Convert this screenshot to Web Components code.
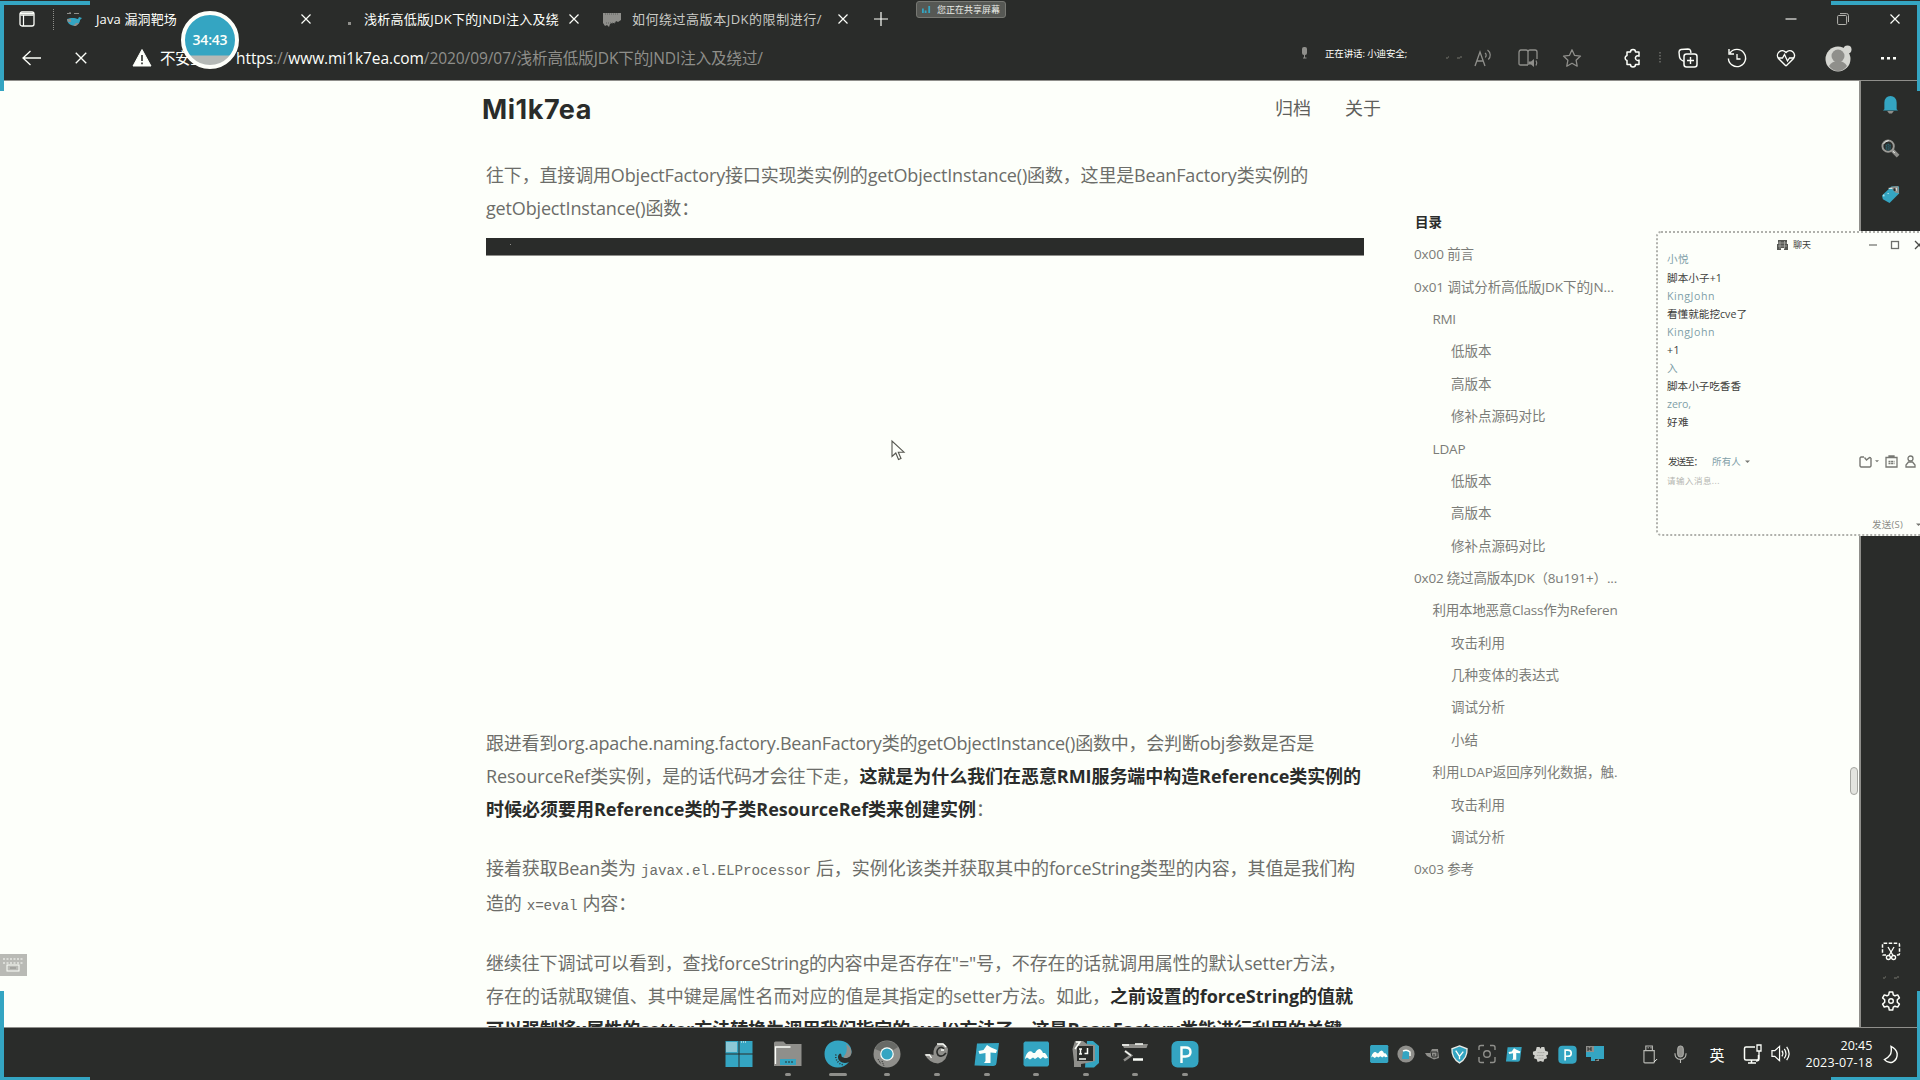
<!DOCTYPE html>
<html lang="zh-CN">
<head>
<meta charset="utf-8">
<title>浅析高低版JDK下的JNDI注入及绕过</title>
<style>
html,body{margin:0;width:1920px;height:1080px;overflow:hidden;background:#2a2c2a}
body{--dark:#2a2c2a;--paper:#fdfffa;--mid:#8f8f8b;--cyan:#34a5c2;font-family:"Open Sans","Noto Sans CJK SC",sans-serif}
</style>
</head>
<body>
<desktop-screen></desktop-screen>
<script>
const ICONS = {
  panel:['0 0 16 16','<rect x="1" y="1" width="14" height="14" rx="2" fill="none" stroke="#fdfffa" stroke-width="1.3"/><path d="M1 2.6h14M1.5 4.2h13M4.5 4v11" stroke="#fdfffa" stroke-width="1.2"/>'],
  whale:['0 0 16 16','<path d="M1 8c0 4 3 6.5 7 6.5 4 0 6-3 6-5.5L16 7l-3-1-1 2C9 6.500 4 6.500 1 8z" fill="#34a5c2"/><path d="M1 8h4v3H2zM10 12l3 0-3 3H7z" fill="#8f8f8b"/><path d="M1 2.500h4M8 2.500h5M4 1v2" stroke="#8f8f8b" stroke-width="1.200"/>'],
  x:['0 0 12 12','<path d="M1.500 1.500l9 9M10.500 1.500l-9 9" stroke="#fdfffa" stroke-width="1.200"/>'],
  dot:['0 0 3 3','<rect width="3" height="3" fill="#8f8f8b"/>'],
  favi:['0 0 18 15','<path d="M0 1h18v7l-3 2-2-1-1 2-3 0-2 1-1 3-2-2-2 1-2-3z" fill="#8f8f8b"/><path d="M2 2h14M3 11h10" stroke="#5f615e" stroke-dasharray="1 1"/>'],
  plus:['0 0 16 16','<path d="M8 1v14M1 8h14" stroke="#fdfffa" stroke-width="1.200"/>'],
  min:['0 0 12 12','<path d="M0.500 6h11" stroke="#fdfffa" stroke-width="1.100"/>'],
  restore:['0 0 12 12','<rect x=".6" y="2.500" width="9" height="9" rx="1" fill="none" stroke="#b5b5b0"/><path d="M3 .6h6.500a2 2 0 0 1 2 2V9" fill="none" stroke="#b5b5b0"/>'],
  back:['0 0 20 16','<path d="M19 8H1M8.500 1L1 8l7.500 7" fill="none" stroke="#fdfffa" stroke-width="1.300"/>'],
  warn:['0 0 18 18','<path d="M9 0.500L18 17H0z" fill="#fdfffa" stroke="#fdfffa" stroke-linejoin="round"/><path d="M9 6v6M9 13.500v1.800" stroke="#2a2c2a" stroke-width="1.600"/>'],
  micS:['0 0 10 12','<rect x="3" y="0" width="5" height="8" rx="2" fill="#8f8f8b"/><path d="M5.500 8v3M4 11h3.500" stroke="#8f8f8b"/>'],
  tinydots:['0 0 18 4','<path d="M1 3h2M3 2h1M12 3h3M15 2h2" stroke="#77776f"/>'],
  read:['0 0 20 20','<path d="M1 18L6 4l5 14M3 13h6" fill="none" stroke="#8f8f8b" stroke-width="1.300"/><path d="M11 5c1.500 1 1.500 3 .3 4.500M13.500 2c3.500 2.500 3.500 7 .8 9.500" fill="none" stroke="#8f8f8b" stroke-width="1.200"/>'],
  book:['0 0 20 20','<path d="M10 17H2.500Q1 17 1 15.500V4.500Q1 2 3 2h5q2 0 2 2v13M10 4q0-2 2-2h5q2 0 2 2v7" fill="none" stroke="#8f8f8b" stroke-width="1.300"/><path d="M10.500 13.500h2.500l3-2.500v8l-3-2.500h-2.500z" fill="#8f8f8b"/><path d="M18 12.500q1.500 2.500 0 5" stroke="#8f8f8b" fill="none" stroke-width="1.200"/>'],
  star:['0 0 20 20','<path d="M10 1.800l2.500 5.500 6 .8-4.400 4.100 1.100 6-5.200-2.900-5.200 2.900 1.100-6L1.500 8.100l6-.8z" fill="none" stroke="#8f8f8b" stroke-width="1.300" stroke-linejoin="round"/>'],
  puzzle:['0 0 20 20','<path d="M4 4h3.500a2.500 2.500 0 0 1 5 0H16v4.200a2.300 2.300 0 1 0 0 3.800v4.500h-3.500a2.500 2.500 0 0 1-5 0H4V12.500a2.600 2.600 0 0 1 0-5z" fill="none" stroke="#fdfffa" stroke-width="1.500" stroke-linejoin="round"/>'],
  vdots:['0 0 2 12','<path d="M1 0v12" stroke="#8f8f8b" stroke-dasharray="1.500 1.500"/>'],
  collect:['0 0 20 20','<path d="M6 13.500L3.500 12Q2 11 1.500 9L1 4q0-2 2-2.500L10 1q2 0 2.500 1.500L13 5" fill="none" stroke="#fdfffa" stroke-width="1.400"/><rect x="6" y="6" width="13" height="13" rx="2.500" fill="none" stroke="#fdfffa" stroke-width="1.500"/><path d="M12.500 9v7M9 12.500h7" stroke="#fdfffa" stroke-width="1.400"/>'],
  history:['0 0 20 20','<path d="M3 5a8.600 8.600 0 1 1-1.600 5.500M2 1v5h5" fill="none" stroke="#fdfffa" stroke-width="1.400"/><path d="M10 6v5h3.500" fill="none" stroke="#fdfffa" stroke-width="1.300"/>'],
  heart:['0 0 20 20','<path d="M10 18L2.500 10.500a4.600 4.600 0 0 1 7.500-6 4.600 4.600 0 0 1 7.500 6L10 18" fill="none" stroke="#fdfffa" stroke-width="1.400"/><path d="M2 10h4.500l2-3.500 3 6.500 2-3H18" fill="none" stroke="#fdfffa" stroke-width="1.300"/>'],
  avatar:['0 0 28 28','<circle cx="14" cy="15" r="12.500" fill="#d5d6d1"/><circle cx="23.500" cy="5.500" r="4" fill="#d5d6d1"/><circle cx="14" cy="12" r="6.500" fill="#8f8f8b"/><path d="M5 22q3-5 9-5t9 5q-3.500 5-9 5t-9-5z" fill="#8f8f8b"/>'],
  more:['0 0 16 4','<rect x="0" y="1" width="3" height="2.500" fill="#fdfffa"/><rect x="6" y="1" width="3" height="2.500" fill="#fdfffa"/><rect x="12" y="1" width="3" height="2.500" fill="#fdfffa"/>'],
  bell:['0 0 18 20','<path d="M2.500 15V8Q3 1 9 1t6.500 7v7l1.500 1.500H1z" fill="#34a5c2"/><path d="M5.500 17h7l-2 2.500h-3z" fill="#8f8f8b"/>'],
  lens:['0 0 20 20','<path d="M12 12l6 6" stroke="#8f8f8b" stroke-width="4"/><circle cx="7.500" cy="7.500" r="6" fill="#2a2c2a" stroke="#9b9b97" stroke-width="2"/><path d="M3 5q1.500-3 5-3.300M12.500 13l2 1.500" stroke="#fdfffa" fill="none"/><path d="M5.500 6v5M7.500 5v7M9.500 6v5" stroke="#34a5c2" stroke-dasharray="1 1"/>'],
  tag:['0 0 20 20','<path d="M1 11L11 1.500 18 1l1 1v7L9 19 2 15z" fill="#34a5c2"/><path d="M10 2l8-1 1 8-4-1z" fill="#8f8f8b"/><circle cx="14.500" cy="5" r="1.500" fill="#2a2c2a"/><path d="M8 3.500h4M3 12v-2M7 9h1M16 3v3" stroke="#fdfffa"/>'],
  snip:['0 0 20 20','<path d="M5 14H2.500Q1.500 14 1.500 12.500V3.500Q1.500 2.200 3 2.200H17q1.500 0 1.500 1.500v9q0 1.300-1.500 1.300h-2" fill="none" stroke="#fdfffa" stroke-width="1.500" stroke-dasharray="3.500 1.500"/><path d="M7 6l5 8.500M13 6L8 14.500" stroke="#fdfffa" stroke-width="1.300"/><circle cx="7.400" cy="16.500" r="2" fill="none" stroke="#fdfffa" stroke-width="1.300"/><circle cx="12.600" cy="16.500" r="2" fill="none" stroke="#fdfffa" stroke-width="1.300"/>'],
  gear:['0 0 20 20','<path d="M8.300 1h3.400l.6 2.800 1.700 1 2.700-.9 1.700 3-2.100 1.900v2.400l2.100 1.900-1.700 3-2.700-.9-1.700 1-.6 2.800H8.300l-.6-2.800-1.700-1-2.700.9-1.700-3 2.100-1.900V8.800L1.600 6.900l1.700-3 2.700.9 1.700-1z" fill="none" stroke="#fdfffa" stroke-width="1.500" stroke-linejoin="round"/><circle cx="10" cy="10" r="2.300" fill="none" stroke="#fdfffa" stroke-width="1.400"/>'],
  win:['0 0 28 28','<path d="M.5 1h13v12.500H.5zM14.500 1h13v12.500h-13zM.5 14.500h13V27H.5zM14.500 14.500h13V27h-13z" fill="#34a5c2"/><path d="M1 2h11v10H1z" fill="#8cc8d6"/><path d="M16 2h5" stroke="#fdfffa" stroke-dasharray="1 1"/>'],
  folder:['0 0 28 28','<path d="M0 3q0-1.500 1.500-1.500h8L12 4h15.500v22H0z" fill="#8f8f8b"/><path d="M1.500 24V7h15" fill="none" stroke="#fdfffa" stroke-width="1.300"/><path d="M6 25v-6h16v6z" fill="#34a5c2"/><path d="M11 22h8" stroke="#2a2c2a" stroke-dasharray="2 1"/>'],
  edge:['0 0 28 28','<path d="M14 0.500C5 .5.500 7 .5 14c0 8 6 13.500 13 13.500 5 0 9-2 11.500-5.500-5 2.500-11 0-11-5 0-1.500.8-2.800 2-3.500 1 0 1.500 1 1.500 2.500 0 1 1.500 1.500 4 1.500 4 0 6-2.500 6-6C27.500 5 22 .5 14 .5z" fill="#34a5c2"/><path d="M22 4c3.500 2 5.500 5 5.500 8 0 3.500-2 5.500-5 6-2 .2-3.500-.5-3-1.500 3.500-3 4-8 2.500-12.500z" fill="#8f8f8b"/><path d="M12 14.500c-1 5 2 9.500 8 10.500" stroke="#2a2c2a" stroke-width="1.500" fill="none" stroke-dasharray="1 1.500"/>'],
  chrome:['0 0 28 28','<circle cx="14" cy="14" r="13.500" fill="#8f8f8b"/><path d="M14 14L2 9A13 13 0 0 1 25 7z" fill="#686a66"/><circle cx="14" cy="14" r="6.800" fill="#fdfffa"/><circle cx="14" cy="14" r="5.600" fill="#34a5c2"/><path d="M5 19l3 5M9 21l2 5" stroke="#2a2c2a" stroke-dasharray="1 1"/>'],
  swirl:['0 0 28 28','<path d="M1.500 14h5l4 1q-1-8 5-11 7-2.500 9.500 5 0 12-10 14.500Q6 23 1.500 14z" fill="#8f8f8b"/><path d="M21 9q-2-3-5-1-3.500 3-1 7 4 3 8-2" fill="none" stroke="#2a2c2a" stroke-width="1.600"/><path d="M2.500 15h4l2 3M14 4h6l3 3M18 10h3" stroke="#fdfffa" stroke-width="1.300" fill="none"/>'],
  up:['0 0 28 28','<path d="M4 3.500L26 3l-2.500 20Q23 26 20 26L1.500 25.500z" fill="#34a5c2"/><path d="M14 5l4 2.500 6 2.500-1 3-5.500-.5V23h-6.500l1.500-2V13L6.500 14l-1-3 5-1z" fill="#fdfffa"/>'],
  mount:['0 0 28 28','<path d="M3 1.500h23l1 1.500v22l-1.500 1.500H3L1.500 25V3z" fill="#34a5c2"/><path d="M3 18.500q1-5 4-7 3-1 4 1.500h2Q15 9 18 9l2 2 1 2h2q2 2 3 5l-3 .5-2-1.500-2.500 2-2.500-2-3 2-2-1.500-3 2-3-2-2 1.500z" fill="#fdfffa"/>'],
  idea:['0 0 28 28','<path d="M15 1h6l6 5v17l-5 4.500h-9z" fill="#34a5c2"/><path d="M3 1h8l4 3 8 1v16l-8 2-6 1v3H2v-5L.5 9z" fill="#8f8f8b"/><rect x="5" y="6" width="16" height="15" fill="#2a2c2a"/><path d="M7 9h3M8.500 9v5M7 14h3M15.500 8v5.500h-3M7 19h7M4 2h4L3 9" stroke="#fdfffa" stroke-width="1.500" fill="none"/>'],
  term:['0 0 28 28','<path d="M1 4h26l-1.500 4H3z" fill="#8f8f8b"/><path d="M1 5h7M14 4h8" stroke="#fdfffa" stroke-width="1.300"/><path d="M4 11l6 4.500-7 5" stroke="#8f8f8b" stroke-width="2.500" fill="none"/><path d="M4 11l6 4.500" stroke="#fdfffa" stroke-width="1.300"/><path d="M12 19.500h10" stroke="#fdfffa" stroke-width="2.500"/>'],
  pdf:['0 0 28 28','<rect x=".5" y="1" width="27" height="26.500" rx="6" fill="#34a5c2"/><path d="M10.500 23V7.500h4q5 0 5 4.500t-5 4.500h-4" fill="none" stroke="#fdfffa" stroke-width="2.400"/>'],
  shield:['0 0 18 20','<path d="M9 1l8 3q.500 10-8 15Q.5 14 1 4z" fill="#34a5c2" stroke="#e8ebe6" stroke-width="1.400"/><path d="M5 6l4 6 4-5M9 12v3" stroke="#fdfffa" stroke-width="1.400" fill="none"/>'],
  capture:['0 0 18 20','<path d="M1 6V3q0-1.500 2-1.500h3M12 1.500h3q2 0 2 2V6M17 13v3.500q0 2-2 2h-3M6 18.500H3q-2 0-2-2V13" fill="none" stroke="#8f8f8b" stroke-width="1.400"/><circle cx="9" cy="10" r="3.300" fill="none" stroke="#8f8f8b" stroke-width="1.400"/>'],
  spiral:['0 0 14 12','<path d="M0 5h5l2-4h6l1 9-5 1.500-7-3.500z" fill="#8f8f8b"/><path d="M6 4h6v5H7z" fill="none" stroke="#2a2c2a"/><path d="M9 6v2" stroke="#2a2c2a"/>'],
  disc:['0 0 18 20','<circle cx="9" cy="10" r="8.600" fill="#8f8f8b"/><path d="M6 7h6v8H5z" fill="#34a5c2"/><path d="M6 7q4-2 7 1v4" stroke="#fdfffa" fill="none" stroke-width="1.400"/>'],
  hand:['0 0 18 18','<path d="M5 1h3l1 2 1-2h3l1 4 3 1v3l-2 1 1 3-3 1-1 3-3-1-3 1-1-3-3-1 1-3-2-1V6l3-1z" fill="#cfd0cb"/><path d="M6 7h7M5 10h8M7 13h5" stroke="#8f8f8b" stroke-dasharray="1 1"/>'],
  cast:['0 0 20 18','<path d="M1 1h18v13H10v2H6v-4H1z" fill="#34a5c2"/><path d="M1 1h8v6H1zM10 16h4v-2" fill="#8f8f8b"/><path d="M3 2v4M3 4h3M6 2v4" stroke="#2a2c2a"/>'],
  usb:['0 0 16 20','<path d="M3 6V1h7v5M1 6h11v12q0 1-1 1H2q-1 0-1-1z" fill="none" stroke="#b9bab5" stroke-width="1.200"/><path d="M5 3h1M8 3h1M12 18l3-3" stroke="#fdfffa"/>'],
  mic:['0 0 14 20','<rect x="4" y="1" width="6" height="12" rx="3" fill="#8f8f8b" stroke="#b9bab5"/><path d="M1 9q0 6.500 6 6.500T13 9M7 16v3.500" fill="none" stroke="#b9bab5" stroke-width="1.200"/>'],
  monitor:['0 0 20 20','<path d="M12 3H3Q1.500 3 1.500 4.500v10Q1.500 16 3 16h11q1.500 0 1.500-1.500V11M8.500 16v3M5 19h8" fill="none" stroke="#fdfffa" stroke-width="1.500"/><path d="M14 1h4v6h-4zM16 7v8q0 2-3 2" fill="none" stroke="#fdfffa" stroke-width="1.300"/>'],
  speaker:['0 0 20 18','<path d="M1 6h3l5-4.500v15L4 12H1z" fill="none" stroke="#fdfffa" stroke-width="1.300"/><path d="M11.500 6q2 3 0 6M14 4q3.500 5 0 10M16.500 2q5 7 0 14" fill="none" stroke="#fdfffa" stroke-width="1.300"/>'],
  moon:['0 0 18 20','<path d="M8.500 1.500q1 6-1 9T1.500 15.500q4 4.500 9 2.500 5-3 4.500-9Q14 4 8.500 1.500z" fill="none" stroke="#fdfffa" stroke-width="1.500"/>'],
  chat:['0 0 11 10','<path d="M1 0h9v4h1v6H7V8H4v2H0V4h1z" fill="#555753"/><path d="M1 3h9M1 6h9M3 1v8M7.500 1v8" stroke="#b5b6b0" stroke-width=".7"/>'],
  gmin:['0 0 10 10','<path d="M1 5h8" stroke="#6d6e6a" stroke-width="1.200"/>'],
  gsq:['0 0 10 10','<rect x="1.500" y="1.500" width="7" height="7" fill="none" stroke="#6d6e6a" stroke-width="1.300"/>'],
  gx:['0 0 10 10','<path d="M1 1l8 8M9 1L1 9" stroke="#4a4b48" stroke-width="1.300"/>'],
  capt:['0 0 13 12','<path d="M5 1H2L1 2v8l1 1h9l1-1V2M5.500 1.500l2 2.500 3-2.500 1.500.5" fill="none" stroke="#777873" stroke-width="1.400"/>'],
  file:['0 0 13 13','<path d="M1 2.500h11v9.500H1zM4 2.500V1h5v1.500" fill="none" stroke="#777873" stroke-width="1.300"/><path d="M3.500 6.500h6M3.500 8.500h6" stroke="#777873" stroke-width="1.300" stroke-dasharray="2 .6"/>'],
  person:['0 0 11 13','<circle cx="5.500" cy="3.500" r="2.500" fill="none" stroke="#777873" stroke-width="1.300"/><path d="M3.500 7H7.500l2.500 3v2H1v-2z" fill="none" stroke="#777873" stroke-width="1.300"/>'],
  chev:['0 0 6 4','<path d="M0 .5h6L3 3.500z" fill="#777873"/>'],
  bars:['0 0 10 10','<path d="M1 9V4M4 9V6M8 9V1" stroke="#34a5c2" stroke-width="2"/>'],
  kbd:['0 0 27 22','<rect width="27" height="22" fill="#b9bab5"/><path d="M3 5h20M3 9h20" stroke="#fdfffa" stroke-dasharray="2 1.500"/><rect x="7" y="11" width="12" height="6" fill="none" stroke="#fdfffa"/><path d="M10 14h6" stroke="#8f8f8b"/>'],
  cursor:['0 0 14 21','<path d="M1 1v15.500l3.800-3.500 2.700 6.500 2.500-1-2.700-6.300H13z" fill="#fdfffa" stroke="#55564f" stroke-width="1.100"/>']
};

function component(name, html, setup) {
  const tpl = document.createElement('template');
  tpl.innerHTML = html;
  customElements.define(name, class extends HTMLElement {
    connectedCallback() {
      if (this.shadowRoot) return;
      this.attachShadow({mode: 'open'}).append(tpl.content.cloneNode(true));
      if (setup) setup(this, this.shadowRoot);
    }
  });
}

component('desktop-screen', `<style>
:host{display:flex;flex-direction:column;position:relative;width:1920px;height:1080px;overflow:hidden;background:var(--dark)}
main{display:flex;height:946px}
.over{position:absolute}
.c{position:absolute;background:var(--cyan)}
</style>
<browser-header></browser-header>
<main><blog-page></blog-page><edge-sidebar></edge-sidebar></main>
<task-bar></task-bar>
<share-pill class="over" style="left:916px;top:1px"></share-pill>
<ui-icon class="over" name="kbd" s="27" style="left:0;top:954px"></ui-icon>
<ui-icon class="over" name="cursor" s="14" style="left:891px;top:440px"></ui-icon>
<chat-window class="over" style="left:1656px;top:231px"></chat-window>
<meeting-timer class="over" style="left:181px;top:11px">34:43</meeting-timer>
<i class="c" style="left:0;top:1px;width:90px;height:4px"></i><i class="c" style="left:0;top:1px;width:4px;height:90px"></i>
<i class="c" style="right:0;top:1px;width:89px;height:4px"></i><i class="c" style="right:0;top:1px;width:3px;height:90px"></i>
<i class="c" style="left:0;bottom:0;width:90px;height:3px"></i><i class="c" style="left:0;bottom:0;width:4px;height:89px"></i>
<i class="c" style="right:0;bottom:0;width:89px;height:3px"></i><i class="c" style="right:0;bottom:0;width:3px;height:89px"></i>`);

component('browser-header', `<style>
:host{display:block;height:80px;border-bottom:1px solid var(--mid);color:var(--paper)}
div{display:flex;align-items:center}
.tabs{height:38px;font-size:13px}
.tabs text-run{margin-bottom:2px}
.bar{height:40px;font-size:15.500px}
.bar>text-run{margin-bottom:1px}
.win{margin-left:auto;margin-right:19px;gap:40px;margin-bottom:1px}
.sep{width:1px;height:21px;background:repeating-linear-gradient(var(--mid) 0 1px,transparent 1px 2px)}
.url{color:var(--mid)} b{font-weight:400;color:var(--paper)}
.talk{font-size:9.500px;padding-bottom:10px}
</style>
<div class="tabs">
<ui-icon name="panel" s="16" ml="19"></ui-icon><i class="sep" style="margin-left:18px"></i>
<ui-icon name="whale" s="16" ml="12"></ui-icon><text-run w="81" ml="14">Java 漏洞靶场</text-run><ui-icon name="x" s="12" ml="123"></ui-icon>
<ui-icon name="dot" s="3" ml="36" style="padding-top:8px"></ui-icon><text-run w="195" ml="13">浅析高低版JDK下的JNDI注入及绕</text-run><ui-icon name="x" s="12" ml="9"></ui-icon>
<ui-icon name="favi" s="18" ml="23"></ui-icon><text-run w="190" ml="11" style="color:#c9cac5">如何绕过高版本JDK的限制进行/</text-run><ui-icon name="x" s="12" ml="15"></ui-icon>
<ui-icon name="plus" s="16" ml="24"></ui-icon>
<div class="win"><ui-icon name="min" s="12"></ui-icon><ui-icon name="restore" s="12"></ui-icon><ui-icon name="x" s="12"></ui-icon></div>
</div>
<div class="bar">
<ui-icon name="back" s="20" ml="22"></ui-icon><ui-icon name="x" s="14" ml="32"></ui-icon><ui-icon name="warn" s="18" ml="45"></ui-icon>
<text-run w="45" ml="9">不安全</text-run>
<text-run class="url" w="527" ml="31"><b>https</b>://<b>www.mi1k7ea.com</b>/2020/09/07/浅析高低版JDK下的JNDI注入及绕过/</text-run>
<div class="talk"><ui-icon name="micS" s="10" ml="536"></ui-icon><text-run w="82" ml="16">正在讲话: 小迪安全;</text-run></div>
<ui-icon name="tinydots" s="18" ml="38" style="padding-bottom:3px"></ui-icon><ui-icon name="read" s="20" ml="11"></ui-icon><ui-icon name="book" s="20" ml="24"></ui-icon><ui-icon name="star" s="20" ml="24"></ui-icon>
<ui-icon name="puzzle" s="20" ml="41"></ui-icon><ui-icon name="vdots" s="2" ml="16"></ui-icon><ui-icon name="collect" s="20" ml="17"></ui-icon><ui-icon name="history" s="20" ml="29"></ui-icon><ui-icon name="heart" s="20" ml="29"></ui-icon><ui-icon name="avatar" s="28" ml="28"></ui-icon><ui-icon name="more" s="16" ml="29"></ui-icon>
</div>`);

component('blog-page', `<style>
:host{display:block;position:relative;box-sizing:border-box;width:1861px;height:946px;overflow:hidden;background:var(--paper);border-right:2px solid var(--mid);color:#6c6d69}
header{display:flex;align-items:center;height:56px;font-size:18px;color:#5f605c}
header text-run{margin-bottom:4px}
header .brand{font:700 27px Inter,sans-serif;color:var(--dark);margin-bottom:0}
section{display:flex;padding-left:486px;gap:50px}
article{width:878px;padding-top:22px;font-size:18px}
article text-run{display:block;height:33px;line-height:33px}
.code text-run{height:34.500px;line-height:34.500px}
b{color:var(--dark);font-weight:700}
code{font:14.300px "Liberation Mono",monospace;margin:0 5px}
.shot{margin:13px 0 471px;height:18px;background:var(--dark);box-sizing:border-box;border-bottom:1px solid var(--mid)}
.shot::before{content:"";display:block;margin-left:24px;padding-top:6px;width:1px;height:1px;background:var(--mid);background-clip:content-box}
.thumb{position:absolute;right:1px;top:686px;width:8px;height:28px;box-sizing:border-box;border:1px solid #a5a6a1;border-radius:4px;background:#e3e4df}
</style>
<header><text-run class="brand" w="110" ml="482">Mi1k7ea</text-run><text-run w="36" ml="683">归档</text-run><text-run w="36" ml="34">关于</text-run></header>
<section><article>
<div><text-run w="822">往下，直接调用ObjectFactory接口实现类实例的getObjectInstance()函数，这里是BeanFactory类实例的</text-run><text-run w="213">getObjectInstance()函数：</text-run></div>
<div class="shot"></div>
<div><text-run w="828">跟进看到org.apache.naming.factory.BeanFactory类的getObjectInstance()函数中，会判断obj参数是否是</text-run><text-run w="875">ResourceRef类实例，是的话代码才会往下走，<b>这就是为什么我们在恶意RMI服务端中构造Reference类实例的</b></text-run><text-run w="508"><b>时候必须要用Reference类的子类ResourceRef类来创建实例</b>：</text-run></div>
<div class="code" style="margin-top:25px"><text-run w="869">接着获取Bean类为<code>javax.el.ELProcessor</code>后，实例化该类并获取其中的forceString类型的内容，其值是我们构</text-run><text-run w="150">造的<code>x=eval</code>内容：</text-run></div>
<div style="margin-top:27px"><text-run w="860">继续往下调试可以看到，查找forceString的内容中是否存在"="号，不存在的话就调用属性的默认setter方法，</text-run><text-run w="867">存在的话就取键值、其中键是属性名而对应的值是其指定的setter方法。如此，<b>之前设置的forceString的值就</b></text-run><text-run w="856"><b>可以强制将x属性的setter方法转换为调用我们指定的eval()方法了，这是BeanFactory类能进行利用的关键</b></text-run></div>
</article><toc-list></toc-list></section><i class="thumb"></i>`);

component('toc-list', `<style>
:host{display:block;width:206px;padding-top:69px;font-size:13.500px;line-height:32.370px;color:#7b7c78}
h4{margin:0;font-size:13.500px;color:var(--dark);line-height:32.400px;padding-left:1px}
text-run{display:block;height:32.370px}
</style><h4>目录</h4>`, (el, root) => {
  [[0,'0x00 前言',60],[0,'0x01 调试分析高低版JDK下的JN...',200],[1,'RMI',23],[2,'低版本'],[2,'高版本'],[2,'修补点源码对比'],[1,'LDAP',33],[2,'低版本'],[2,'高版本'],[2,'修补点源码对比'],
   [0,'0x02 绕过高版本JDK（8u191+）...',203],[1,'利用本地恶意Class作为Referen',185],[2,'攻击利用'],[2,'几种变体的表达式'],[2,'调试分析'],[2,'小结'],[1,'利用LDAP返回序列化数据，触.',185],[2,'攻击利用'],[2,'调试分析'],[0,'0x03 参考',60]
  ].forEach(([lv, t, w]) => {
    const r = document.createElement('text-run');
    r.textContent = t;
    r.setAttribute('w', w || t.length * 13.5);
    r.setAttribute('ml', lv * 18.5);
    root.append(r);
  });
});

component('edge-sidebar', `<style>
:host{display:flex;flex-direction:column;align-items:center;width:59px;height:946px}
</style>
<ui-icon name="bell" s="17" style="margin-top:14px"></ui-icon><ui-icon name="lens" s="19" style="margin-top:25px"></ui-icon><ui-icon name="tag" s="19" style="margin-top:27px"></ui-icon>
<ui-icon name="snip" s="20" style="margin-top:auto"></ui-icon><ui-icon name="tinydots" s="18" style="margin-top:14px"></ui-icon><ui-icon name="gear" s="20" style="margin-top:12px;margin-bottom:16px"></ui-icon>`);

component('task-bar', `<style>
:host{display:flex;box-sizing:border-box;height:53px;border-top:1px solid var(--mid);color:var(--paper)}
.apps{display:flex;margin-left:714px;height:52px}
.app{display:flex;flex-direction:column;align-items:center;width:49.550px;padding-top:12px}
.app i{width:6px;height:3px;border-radius:2px;background:var(--mid);margin-top:5px}
.app.active i{width:18px}.app.none i{visibility:hidden}
.tray{display:flex;align-items:center;height:52px;margin-left:160px}
.clock{display:flex;flex-direction:column;align-items:flex-end;font-size:12.500px;line-height:17px;margin-left:15px;width:67px}
</style>
<div class="apps"></div>
<div class="tray">
<ui-icon name="mount" s="20"></ui-icon><ui-icon name="disc" s="18" ml="8"></ui-icon><ui-icon name="spiral" s="14" ml="10"></ui-icon><ui-icon name="shield" s="17" ml="12"></ui-icon><ui-icon name="capture" s="18" ml="10"></ui-icon><ui-icon name="up" s="18" ml="9"></ui-icon><ui-icon name="hand" s="17" ml="9"></ui-icon><ui-icon name="pdf" s="19" ml="9"></ui-icon><ui-icon name="cast" s="20" ml="8"></ui-icon>
<ui-icon name="usb" s="15" ml="38"></ui-icon><ui-icon name="mic" s="13" ml="16"></ui-icon><text-run w="15" ml="22" style="font-size:15px">英</text-run><ui-icon name="monitor" s="20" ml="19"></ui-icon><ui-icon name="speaker" s="19" ml="8"></ui-icon>
<div class="clock"><text-run w="32">20:45</text-run><text-run w="67">2023-07-18</text-run></div><ui-icon name="moon" s="17" ml="11"></ui-icon>
</div>`, (el, root) => {
  root.querySelector('.apps').innerHTML = ['win','folder','edge','chrome','swirl','up','mount','idea','term','pdf']
    .map(n => `<div class="app ${n === 'edge' ? 'active' : n === 'win' ? 'none' : ''}"><ui-icon name="${n}" s="28"></ui-icon><i></i></div>`).join('');
});

component('share-pill', `<style>
:host{display:flex;box-sizing:border-box;align-items:center;width:90px;height:17px;border:1px solid #777873;border-radius:3px;background:#565854;color:#e9ebe6;font-size:9px}
</style><ui-icon name="bars" s="9" ml="5"></ui-icon><text-run w="63" ml="6">您正在共享屏幕</text-run>`);

component('meeting-timer', `<style>
:host{display:flex;box-sizing:border-box;align-items:center;justify-content:center;width:58px;height:58px;border:4px solid var(--paper);border-radius:50%;background:linear-gradient(var(--cyan) 0 80%,#b4b9b6 82%);color:var(--paper);font:600 14px "Open Sans",sans-serif}
span{margin-top:-1px;letter-spacing:-.2px}
</style><span><slot></slot></span>`);

component('chat-window', `<style>
:host{display:flex;flex-direction:column;box-sizing:border-box;width:280px;height:305px;background:var(--paper);border:2px dotted #b0b1ac;border-radius:5px;color:#3c3d3a;font-size:10.600px;line-height:18.100px}
header,.row{display:flex;align-items:center}
header{height:24px;padding-left:119px}
.log{display:flex;flex-direction:column;padding-left:9px;height:183px}
.log div{display:flex;flex-direction:column;margin-top:-6.500px}
.log text-run{flex:none;height:18.100px}
.n{color:#7fa0a8}
.g{color:#8b8c87}
</style>
<header><ui-icon name="chat" s="11"></ui-icon><text-run w="18" ml="5" style="font-size:9px">聊天</text-run><ui-icon name="gmin" s="10" ml="57"></ui-icon><ui-icon name="gsq" s="10" ml="12"></ui-icon><ui-icon name="gx" s="10" ml="14"></ui-icon></header>
<div class="log"><div>
<text-run class="n" w="22">小悦</text-run><text-run w="55">脚本小子+1</text-run><text-run class="n" w="48">KingJohn</text-run><text-run w="80">看懂就能挖cve了</text-run><text-run class="n" w="48">KingJohn</text-run><text-run w="13">+1</text-run><text-run class="n" w="11">入</text-run><text-run w="74">脚本小子吃香香</text-run><text-run class="n" w="24">zero,</text-run><text-run w="22">好难</text-run></div></div>
<div class="row" style="margin-top:13px;padding-left:10px;font-size:9.500px"><text-run w="34">发送至：</text-run><text-run class="n" w="29" ml="10">所有人</text-run><ui-icon name="chev" s="5" ml="4"></ui-icon><ui-icon name="capt" s="13" ml="109"></ui-icon><ui-icon name="chev" s="4" ml="3"></ui-icon><ui-icon name="file" s="13" ml="6"></ui-icon><ui-icon name="person" s="11" ml="7"></ui-icon></div>
<div class="row" style="margin-top:1px;padding-left:9px;font-size:8.500px"><text-run w="53" style="color:#b4b5b0">请输入消息...</text-run></div>
<div class="row" style="margin-top:26px;padding-left:214px;font-size:9.500px"><text-run class="g" w="31">发送(S)</text-run><ui-icon name="chev" s="5" ml="13"></ui-icon></div>`);

component('ui-icon', `<style>:host{display:block;flex:none}svg{display:block;overflow:visible;width:100%}</style><svg></svg>`, (el, root) => {
  const [vb, body] = ICONS[el.getAttribute('name')];
  const svg = root.querySelector('svg');
  svg.setAttribute('viewBox', vb);
  svg.innerHTML = body;
  el.style.width = el.getAttribute('s') + 'px';
  if (el.hasAttribute('ml')) el.style.marginLeft = el.getAttribute('ml') + 'px';
});

/* A single line of text whose tracking is tuned so that it fills the width in its w attribute. */
component('text-run', `<style>:host{display:block;flex:none;white-space:nowrap}span{display:inline-block}</style><span><slot></slot></span>`, (el, root) => {
  const w = parseFloat(el.getAttribute('w'));
  const span = root.querySelector('span');
  el.style.width = w + 'px';
  if (el.hasAttribute('ml')) el.style.marginLeft = el.getAttribute('ml') + 'px';
  const natural = span.getBoundingClientRect().width;
  if (natural) span.style.letterSpacing = (w - natural) / el.textContent.length + 'px';
});
</script>
</body>
</html>
